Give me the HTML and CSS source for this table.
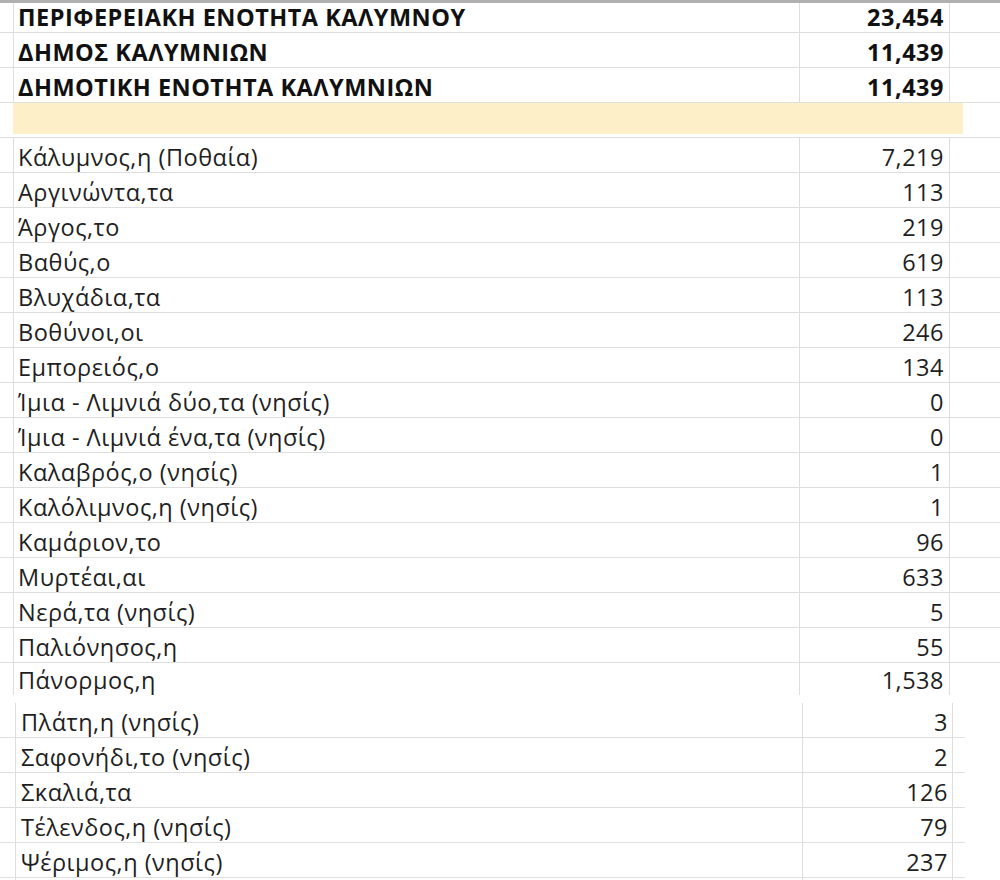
FILE: index.html
```html
<!DOCTYPE html>
<html lang="el">
<head>
<meta charset="utf-8">
<title>Καλύμνος</title>
<link rel="stylesheet" href="styles.css">
</head>
<body>
<div class="sheet sheet-top">
  <div class="row row-first bold"><div class="stub"></div><div class="cell name">ΠΕΡΙΦΕΡΕΙΑΚΗ ΕΝΟΤΗΤΑ ΚΑΛΥΜΝΟΥ</div><div class="cell num">23,454</div><div class="cell tail"></div></div>
  <div class="row bold"><div class="stub"></div><div class="cell name">ΔΗΜΟΣ ΚΑΛΥΜΝΙΩΝ</div><div class="cell num">11,439</div><div class="cell tail"></div></div>
  <div class="row bold"><div class="stub"></div><div class="cell name">ΔΗΜΟΤΙΚΗ ΕΝΟΤΗΤΑ ΚΑΛΥΜΝΙΩΝ</div><div class="cell num">11,439</div><div class="cell tail"></div></div>
  <div class="row row-yellow"><div class="stub"></div><div class="fill"></div><div class="cell-plain"></div></div>
  <div class="row"><div class="stub"></div><div class="cell name">Κάλυμνος,η (Ποθαία)</div><div class="cell num">7,219</div><div class="cell tail"></div></div>
  <div class="row"><div class="stub"></div><div class="cell name">Αργινώντα,τα</div><div class="cell num">113</div><div class="cell tail"></div></div>
  <div class="row"><div class="stub"></div><div class="cell name">Άργος,το</div><div class="cell num">219</div><div class="cell tail"></div></div>
  <div class="row"><div class="stub"></div><div class="cell name">Βαθύς,ο</div><div class="cell num">619</div><div class="cell tail"></div></div>
  <div class="row"><div class="stub"></div><div class="cell name">Βλυχάδια,τα</div><div class="cell num">113</div><div class="cell tail"></div></div>
  <div class="row"><div class="stub"></div><div class="cell name">Βοθύνοι,οι</div><div class="cell num">246</div><div class="cell tail"></div></div>
  <div class="row"><div class="stub"></div><div class="cell name">Εμπορειός,ο</div><div class="cell num">134</div><div class="cell tail"></div></div>
  <div class="row"><div class="stub"></div><div class="cell name">Ίμια - Λιμνιά δύο,τα (νησίς)</div><div class="cell num">0</div><div class="cell tail"></div></div>
  <div class="row"><div class="stub"></div><div class="cell name">Ίμια - Λιμνιά ένα,τα (νησίς)</div><div class="cell num">0</div><div class="cell tail"></div></div>
  <div class="row"><div class="stub"></div><div class="cell name">Καλαβρός,ο (νησίς)</div><div class="cell num">1</div><div class="cell tail"></div></div>
  <div class="row"><div class="stub"></div><div class="cell name">Καλόλιμνος,η (νησίς)</div><div class="cell num">1</div><div class="cell tail"></div></div>
  <div class="row"><div class="stub"></div><div class="cell name">Καμάριον,το</div><div class="cell num">96</div><div class="cell tail"></div></div>
  <div class="row"><div class="stub"></div><div class="cell name">Μυρτέαι,αι</div><div class="cell num">633</div><div class="cell tail"></div></div>
  <div class="row"><div class="stub"></div><div class="cell name">Νερά,τα (νησίς)</div><div class="cell num">5</div><div class="cell tail"></div></div>
  <div class="row"><div class="stub"></div><div class="cell name">Παλιόνησος,η</div><div class="cell num">55</div><div class="cell tail"></div></div>
  <div class="row row-cut"><div class="stub"></div><div class="cell name">Πάνορμος,η</div><div class="cell num">1,538</div><div class="cell tail"></div></div>
</div>
<div class="sheet sheet-bottom">
  <div class="row"><div class="stub"></div><div class="cell name">Πλάτη,η (νησίς)</div><div class="cell num">3</div><div class="cell tail"></div></div>
  <div class="row"><div class="stub"></div><div class="cell name">Σαφονήδι,το (νησίς)</div><div class="cell num">2</div><div class="cell tail"></div></div>
  <div class="row"><div class="stub"></div><div class="cell name">Σκαλιά,τα</div><div class="cell num">126</div><div class="cell tail"></div></div>
  <div class="row"><div class="stub"></div><div class="cell name">Τέλενδος,η (νησίς)</div><div class="cell num">79</div><div class="cell tail"></div></div>
  <div class="row"><div class="stub"></div><div class="cell name">Ψέριμος,η (νησίς)</div><div class="cell num">237</div><div class="cell tail"></div></div>
  <div class="row"><div class="stub"></div><div class="cell name"></div><div class="cell num"></div><div class="cell tail"></div></div>
</div>
</body>
</html>
```
FILE: styles.css
```css
html, body {
  margin: 0;
  padding: 0;
  background: #ffffff;
}
body {
  width: 1000px;
  height: 880px;
  overflow: hidden;
  font-family: "Open Sans", "Noto Sans", sans-serif;
  font-size: 23.5px;
  letter-spacing: 0.5px;
  color: #1f1f1f;
}
.sheet-top {
  border-top: 3px solid #b0b0b0;
}
.row {
  display: grid;
  grid-template-columns: 13px 786px 150px 1fr;
  height: 35px;
  box-sizing: border-box;
  border-bottom: 1px solid #dedede;
}
.row-first {
  height: 30px;
}
.row-cut {
  height: 32px;
  border-bottom: none;
}
.sheet-bottom {
  margin-top: 8px;
  width: 965px;
}
.sheet-bottom .row {
  grid-template-columns: 15px 787px 150px 1fr;
}
.cell {
  border-left: 1px solid #dedede;
  display: flex;
  align-items: flex-end;
  padding-bottom: 4px;
  line-height: 22px;
  white-space: nowrap;
}
.name {
  padding-left: 4px;
}
.sheet-bottom .name {
  padding-left: 5px;
}
.num {
  justify-content: flex-end;
  padding-right: 5px;
}
.sheet-bottom .num {
  padding-right: 4px;
}
.bold .cell {
  font-weight: 700;
  color: #111111;
}
.row-yellow {
  grid-template-columns: 13px 950px 1fr;
}
.fill {
  background: #fdefc8;
  margin-bottom: 3px;
}
```
